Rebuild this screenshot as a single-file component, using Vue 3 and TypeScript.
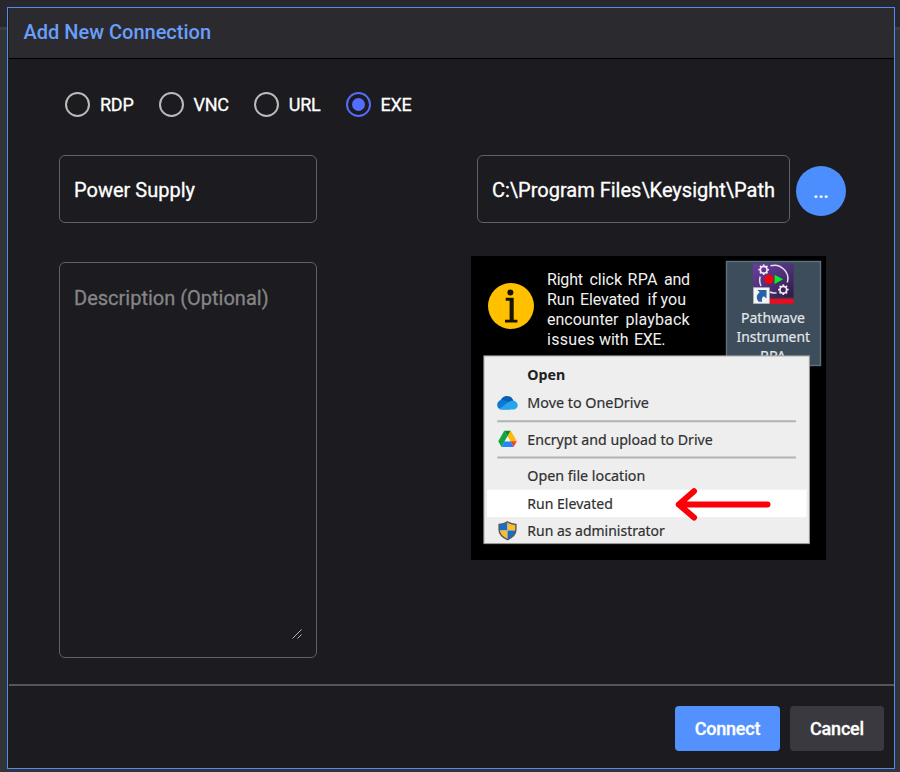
<script setup lang="ts">
import { ref } from 'vue'

type Kind = 'RDP' | 'VNC' | 'URL' | 'EXE'
interface Word { x: number; w: number; t: string }
interface MenuItem { label: string; y: number; w: number; bold?: boolean }

const kinds: Kind[] = ['RDP', 'VNC', 'URL', 'EXE']
const kind = ref<Kind>('EXE')
const name = ref('Power Supply')
const path = ref('C:\\Program Files\\Keysight\\Path')
const description = ref('')

const hint: { y: number; words: Word[] }[] = [
  { y: 28.6, words: [{ x: 76, w: 36, t: 'Right' }, { x: 118.5, w: 32.5, t: 'click' }, { x: 156.5, w: 30, t: 'RPA' }, { x: 193, w: 26, t: 'and' }] },
  { y: 48.6, words: [{ x: 76, w: 27.5, t: 'Run' }, { x: 109, w: 59.5, t: 'Elevated' }, { x: 176.5, w: 9.5, t: 'if' }, { x: 189.5, w: 25.5, t: 'you' }] },
  { y: 68.6, words: [{ x: 76, w: 71.5, t: 'encounter' }, { x: 154.5, w: 64, t: 'playback' }] },
  { y: 88.6, words: [{ x: 76, w: 47.5, t: 'issues' }, { x: 128, w: 29.5, t: 'with' }, { x: 163, w: 31.5, t: 'EXE.' }] },
]

const menu: MenuItem[] = [
  { label: 'Open', y: 124.4, w: 38, bold: true },
  { label: 'Move to OneDrive', y: 152, w: 121.5 },
  { label: 'Encrypt and upload to Drive', y: 188.5, w: 185.5 },
  { label: 'Open file location', y: 225, w: 118 },
  { label: 'Run Elevated', y: 252.6, w: 85.5 },
  { label: 'Run as administrator', y: 280.3, w: 137.5 },
]

const teeth = [0, 45, 90, 135, 180, 225, 270, 315]
const gears = [{ x: 292.7, y: 13.7 }, { x: 312.3, y: 33.7 }]
</script>

<template>
  <div class="page">
    <section class="dialog">
      <header class="head">Add New Connection</header>

      <div class="body">
        <div class="kinds">
          <label v-for="k in kinds" :key="k" class="kind">
            <input v-model="kind" type="radio" name="kind" :value="k" class="radio" />
            <span>{{ k }}</span>
          </label>
        </div>

        <div class="cols">
          <div class="left">
            <input v-model="name" class="field name" />
            <div class="area">
              <textarea v-model="description" placeholder="Description (Optional)"></textarea>
              <svg class="grip" width="10" height="10" viewBox="0 0 10 10">
                <path d="M.5 9.5 9.5 .5M5.5 9.5 9.5 5.5" fill="none" stroke="#c9c9c9" stroke-width=".9" />
              </svg>
            </div>
          </div>

          <div class="right">
            <div class="pathrow">
              <input v-model="path" class="field path" />
              <button class="browse">...</button>
            </div>

            <svg class="help" width="355" height="304" viewBox="0 0 355 304">
              <defs>
                <linearGradient id="purple" x1="0" y1="0" x2="1" y2="1">
                  <stop offset="0" stop-color="#6d3ba0" />
                  <stop offset=".5" stop-color="#50307a" />
                  <stop offset="1" stop-color="#2c1a42" />
                </linearGradient>
                <clipPath id="shield">
                  <path d="M36.5 265.800c2.500 1.800 5 2.600 8.400 2.700v5.300c0 4-3 7.400-8.400 9.800-5.400-2.400-8.400-5.800-8.400-9.800v-5.300c3.400-.1 5.900-.9 8.400-2.700z" />
                </clipPath>
              </defs>
              <rect width="355" height="304" fill="#000" />

              <circle cx="40" cy="50" r="23" fill="#ffc000" />
              <circle cx="39.400" cy="36.400" r="3" fill="#181200" />
              <path d="M34.700 41.800h8v22h3.700v2.800H34v-2.800h4.600v-19h-3.900z" fill="#181200" />

              <g class="hint">
                <text v-for="line in hint" :key="line.y" :y="line.y">
                  <tspan v-for="w in line.words" :key="w.x" :x="w.x" :textLength="w.w">{{ w.t }}</tspan>
                </text>
              </g>

              <rect x="255.500" y="5.500" width="94" height="104" fill="#3d4d5c" stroke="#5c7283" stroke-width="1.400" />
              <rect x="282" y="7.500" width="40.500" height="34" fill="url(#purple)" />
              <rect x="298" y="41" width="24.500" height="1.900" fill="#33363f" />
              <rect x="298" y="42.700" width="24.500" height="5" fill="#ee0a22" />
              <path d="M299.500 9.800a13.500 13.500 0 0 1 16.800 16.700M289.200 20.500a13.800 13.800 0 0 0 .8 9.500M298.500 36a13.800 13.800 0 0 0 7 .7" fill="none" stroke="#e4dfe9" stroke-width="1.500" />
              <g v-for="g in gears" :key="g.x" fill="none" stroke="#f1eef4">
                <circle :cx="g.x" :cy="g.y" r="3.400" stroke-width="1.700" />
                <path v-for="a in teeth" :key="a" :d="`M${g.x} ${g.y - 3.8}v-1.500`" :transform="`rotate(${a} ${g.x} ${g.y})`" stroke-width="1.700" />
              </g>
              <circle cx="298" cy="23.300" r="4.600" fill="#fb0007" />
              <path d="M303.600 18.700v9.200l8.600-4.600z" fill="#08ef25" />
              <rect x="282.500" y="31.700" width="15.800" height="15.800" fill="#f4f5f6" stroke="#b9bcc0" stroke-width=".7" />
              <path d="M286.500 34h9v8.500l-2.700-2.300c-1.700 1-2.300 2.700-1.600 5.500h-3.400c-3-3.500-2.600-6.700.8-9.400z" fill="#2961a8" />
              <g class="tile">
                <text x="270" y="66.700" textLength="64" lengthAdjust="spacingAndGlyphs">Pathwave</text>
                <text x="265.500" y="85.700" textLength="73.500" lengthAdjust="spacingAndGlyphs">Instrument</text>
                <text x="289" y="104.500" textLength="26" lengthAdjust="spacingAndGlyphs">RPA</text>
              </g>

              <rect x="12.900" y="99.900" width="325.500" height="187.700" fill="#eee" stroke="#9b9b9b" />
              <rect x="16" y="233.700" width="319.500" height="27.500" fill="#fff" />
              <path d="M26.300 165.200H325M26.300 201.500H325" stroke="#b1b3b3" stroke-width="2" />
              <g class="menu">
                <text v-for="m in menu" :key="m.label" x="56.300" :y="m.y" :textLength="m.w" lengthAdjust="spacingAndGlyphs" :class="{ bold: m.bold }">{{ m.label }}</text>
              </g>

              <path d="M29 146.500c.5-4 3.500-6.500 7-6.500 3.200 0 5.500 1.800 6.500 4.800l-1 4-8 1z" fill="#0c5fb5" />
              <path d="M26.200 149c0-3 2.200-5 5-5 3.800 0 6.800 2.500 10.800 5l-3 4.500h-8c-3 0-4.800-2-4.800-4.500z" fill="#0a78d6" />
              <path d="M28.300 152.500c3-1.500 6-4.500 9-6.300 1.300-.9 2.800-1.500 4.400-1.500 2.800 0 5 1.900 5 4.500s-1.900 4.300-4.500 4.300H31c-1.200 0-2-.4-2.700-1z" fill="#28a4ea" />

              <path d="m33.200 174.700 3.300 5.700-6 10.600-3.200-5.800z" fill="#12a347" />
              <path d="M33.200 174.700h6.600l-3.300 5.700z" fill="#0a8a35" />
              <path d="M39.800 174.700l6 10.500h-6.500l-2.800-4.800z" fill="#ffba00" />
              <path d="M39.300 185.200h6.500l-3.200 5.800z" fill="#ea4335" />
              <path d="M33.700 185.200h5.600l3.300 5.800H30.500z" fill="#2684fc" />
              <path d="m36.500 180.400 2.800 4.800h-5.600z" fill="#f4f4f4" />

              <g clip-path="url(#shield)">
                <rect x="27" y="265" width="9.500" height="9.500" fill="#176ec9" />
                <rect x="36.500" y="265" width="9.500" height="9.500" fill="#fdbb30" />
                <rect x="27" y="274.500" width="9.500" height="10" fill="#fdbb30" />
                <rect x="36.500" y="274.500" width="9.500" height="10" fill="#176ec9" />
              </g>
              <path d="M36.500 265.800c2.500 1.800 5 2.600 8.400 2.700v5.300c0 4-3 7.400-8.400 9.800-5.400-2.400-8.400-5.800-8.400-9.800v-5.300c3.400-.1 5.900-.9 8.400-2.700z" fill="none" stroke="#56595c" stroke-width="1.400" />

              <path d="M296.500 248.500H207.800M223 235.200 207.800 248.500 223 261.500" fill="none" stroke="#fb0006" stroke-width="6" stroke-linecap="round" stroke-linejoin="round" />
            </svg>
          </div>
        </div>
      </div>

      <footer class="foot">
        <button class="btn primary">Connect</button>
        <button class="btn">Cancel</button>
      </footer>
    </section>
  </div>
</template>

<style>
body { margin: 0; background: #343539; }
</style>

<style scoped>
* { box-sizing: border-box; }
.page {
  height: 772px;
  padding: 7px 5px 3px 7px;
  background: linear-gradient(#28272c 0 27px, #3b3d41 27px 30px, #333438 30px);
  font-family: Roboto, "Liberation Sans", sans-serif;
  font-weight: 500;
  color: #fff;
}
.dialog {
  display: flex;
  flex-direction: column;
  height: 762px;
  padding: 0 0 0 1px;
  border: 1px solid #4b8bfa;
  background: #1c1b1f;
}
.head {
  flex: none;
  height: 51px;
  padding-left: 14.5px;
  border-bottom: 1px solid #000;
  background: #2b2a2f;
  color: #699ffb;
  font-size: 20px;
  line-height: 49px;
}
.body { flex: 1; padding: 33px 48px 0 50px; }
.kinds { display: flex; height: 25px; padding-left: 6px; gap: 25px; }
.kind {
  display: flex;
  align-items: center;
  gap: 10px;
  font-size: 18px;
  font-weight: 400;
  letter-spacing: -.25px;
  -webkit-text-stroke: .3px #fff;
}
.radio {
  appearance: none;
  display: grid;
  place-items: center;
  width: 25px;
  height: 25px;
  margin: 0;
  border: 2px solid #bbb;
  border-radius: 50%;
}
.radio:checked { border-color: #536dfe; }
.radio:checked::before { content: ""; width: 13px; height: 13px; border-radius: 50%; background: #536dfe; }
.cols { display: flex; justify-content: space-between; padding-top: 38px; }
.left { display: flex; flex-direction: column; gap: 39px; width: 258px; }
.field, .area { border: 1px solid #616065; border-radius: 6px; background: transparent; }
.field {
  height: 68px;
  padding: 2px 14px 0;
  color: #fff;
  font: 400 20px Roboto, "Liberation Sans", sans-serif;
  -webkit-text-stroke: .3px #fff;
  outline: none;
}
.name { width: 258px; }
.path { width: 313px; }
.area { position: relative; height: 396px; padding: 23px 14px 18px; }
.area textarea {
  display: block;
  width: 100%;
  height: 100%;
  padding: 0;
  border: 0;
  background: transparent;
  color: #fff;
  font: 400 20px/24px Roboto, "Liberation Sans", sans-serif;
  resize: none;
  outline: none;
}
.area textarea::placeholder { color: #858587; -webkit-text-stroke: .3px #858587; }
.grip { position: absolute; right: 14px; bottom: 18px; }
.right { display: flex; flex-direction: column; align-items: flex-end; width: 375px; }
.pathrow { display: flex; align-items: center; gap: 6px; height: 68px; }
.browse {
  width: 50px;
  height: 50px;
  margin-top: 4px;
  padding: 0;
  border: 0;
  border-radius: 50%;
  background: #4d8eff;
  color: #fff;
  font: 700 18px Roboto, "Liberation Sans", sans-serif;
}
.help { display: block; margin: 33px 20px 0 0; }
.hint { fill: #f0f0f0; font: 400 16px Roboto, sans-serif; }
.tile { fill: #e3e7ea; font: 400 15px "Noto Sans", sans-serif; stroke: #e3e7ea; stroke-width: .2px; }
.menu { fill: #303030; font: 400 14.800px "Noto Sans", sans-serif; stroke: #303030; stroke-width: .2px; }
.bold { fill: #202020; font-weight: 700; stroke: none; }
.foot {
  display: flex;
  flex: none;
  justify-content: flex-end;
  gap: 10px;
  height: 84px;
  padding: 20px 10px 0;
  border-top: 2px solid #55565a;
}
.btn {
  width: 94px;
  height: 45px;
  padding: 0;
  border: 0;
  border-radius: 4px;
  background: #3a3940;
  color: #fff;
  font: 500 18px Roboto, "Liberation Sans", sans-serif;
  letter-spacing: -.2px;
  -webkit-text-stroke: .3px #fff;
}
.primary { width: 105px; background: #5391ff; }
</style>
